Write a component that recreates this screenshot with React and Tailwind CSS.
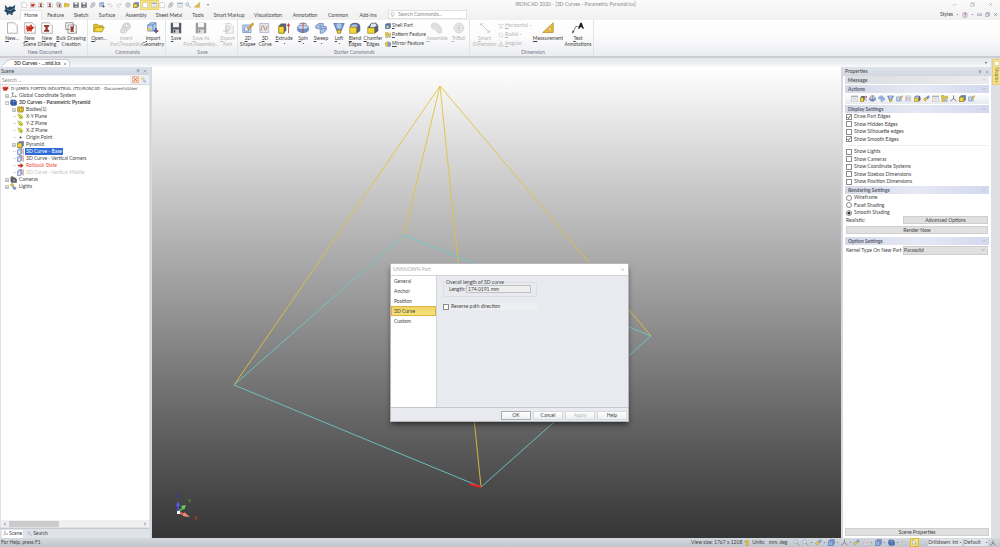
import React, { useState } from 'react';

const drawings = {
    page: <path d="M2 1h9l4 4v10H2z" fill="#fdfdfd" stroke="#999" />,
    scene: (
        <>
            <path d="M1 1h10l4 4v10H1z" fill="#fff" stroke="#999" />
            <path d="M3 4l3 2 4-3 1 3 3 1-3 3-1 3-3-1-3 1-1-4z" fill="#d6402c" />
            <path d="M5 8l3 1 4-2" stroke="#7c1a10" fill="none" />
        </>
    ),
    rootScene: (
        <>
            <path d="M1 2l4 3 3-2 3 2 4-3-1 5 1 2-3 1-1 4-3-2-4 2-1-4-2-2 1-2z" fill="#d6402c" />
            <path d="M4 8l4 2 4-3" stroke="#7c1a10" strokeWidth="1.500" fill="none" />
        </>
    ),
    drawing: (
        <>
            <path d="M1 1h10l4 4v10H1z" fill="#fff" stroke="#999" />
            <path d="M4 4h7v2l-2 1v3l2 1v2H4v-2l2-1V7L4 6z" fill="#933a30" />
        </>
    ),
    bulk: (
        <>
            <path d="M1 1h10v9H1zM4 4h10l1 1v10H4z" fill="#fff" stroke="#777" />
            <path d="M7 6h5v2l-1 1v2l1 1v1H7v-1l1-1V9L7 8z" fill="#933a30" />
        </>
    ),
    folder: (
        <>
            <path d="M1 13V3h5l2 2h5v3" fill="#e8c22a" stroke="#a08a2a" />
            <path d="M1 13l3-6h11l-3 6z" fill="#f5dc3c" stroke="#a08a2a" />
        </>
    ),
    save: (
        <>
            <path d="M1 1h13l1 1v13H1z" fill="#555963" />
            <path d="M4 1h8v6H4z" fill="#f4f4f4" />
            <path d="M4 10h8v5H4z" fill="#c8ccd4" />
            <path d="M5 11h2v3H5z" fill="#333" />
        </>
    ),
    gears: (
        <>
            <path d="M3 6l3-4 5-1 3 4-1 4-5 2-4-1z" fill="#ccc" stroke="#999" />
            <path d="M1 10l4-3 4 2v4l-4 2-4-1z" fill="#ddd" stroke="#999" />
            <circle cx="9" cy="5" r="2" fill="#fff" stroke="#999" />
            <circle cx="5" cy="11" r="1.5" fill="#fff" stroke="#999" />
        </>
    ),
    importGeo: (
        <>
            <path d="M1 4l4-3h7v8l-4 3H1z" fill="#bcd3f2" stroke="#4f73b3" />
            <path d="M1 4h7v8M8 4l4-3" fill="none" stroke="#4f73b3" />
            <circle cx="3" cy="10" r="2" fill="#efcb32" />
            <path d="M12 8v7M9 12h6" stroke="#2f55a8" strokeWidth="2" />
            <path d="M12 12h3" stroke="#d04030" strokeWidth="2" />
        </>
    ),
    exportPart: (
        <>
            <path d="M5 2h6l4 4v9H5z" fill="#eee" stroke="#aaa" />
            <circle cx="8" cy="8" r="3" fill="#ddd" stroke="#aaa" />
            <path d="M1 12h6M5 10l3 2-3 2" stroke="#999" fill="none" />
        </>
    ),
    shape2d: (
        <>
            <path d="M1 4h11v10H1z" fill="#c9dcf5" stroke="#6d8cbc" />
            <path d="M3 12V8l3-2 3 3v3z" fill="#eef5ff" stroke="#5878ac" />
            <path d="M7 9l7-8 2 2-7 7z" fill="#e3a53a" stroke="#9c6b1c" strokeWidth=".6" />
        </>
    ),
    curve3d: (
        <>
            <path d="M1 2h12v12H1z" fill="#dfe6f5" stroke="#a4b0cc" />
            <path d="M3 12c0-9 3-9 4-4s3 4 4-3" stroke="#d07840" fill="none" strokeWidth="1.2" />
        </>
    ),
    extrude: (
        <>
            <path d="M1 5l3-3h7v9l-3 4H1z" fill="#5a6478" />
            <path d="M1 6h7v9H1z" fill="#f4d532" stroke="#8a7414" />
            <path d="M14 15V3M12.500 5l1.500-3 1.500 3z" stroke="#cf3328" fill="#cf3328" />
        </>
    ),
    spin: (
        <>
            <path d="M1 7v4c2 4 12 4 14 0V7z" fill="#7296cc" stroke="#4a6698" />
            <ellipse cx="8" cy="7" rx="7" ry="3" fill="#c2d5f0" stroke="#5d7cae" />
            <path d="M8 1v13" stroke="#cf3328" />
            <path d="M3 3c2-2 8-2 10 0" stroke="#555" fill="none" />
        </>
    ),
    sweep: (
        <>
            <path d="M1 5l4-3h6v4h4v5l-5 4H7V9H4L1 8z" fill="#a8c3ea" stroke="#6280b2" />
            <path d="M5 5h3v4h7" stroke="#6280b2" fill="none" />
        </>
    ),
    loft: (
        <>
            <path d="M1 2h14l-4 9H5z" fill="#7898cc" stroke="#50699a" />
            <path d="M5 2h6v5l-3 3-3-3z" fill="#afc6ea" />
            <path d="M5 11h6l-1 4H6z" fill="#f1d134" stroke="#8a7414" />
        </>
    ),
    blend: (
        <>
            <path d="M1 6c0-3 3-5 7-5s7 2 7 5v6l-4 3H1z" fill="#5c6880" />
            <path d="M2 6c2-4 8-4 10-1l-3 2H2z" fill="#a9c5ee" />
            <path d="M1 7h9v8H1z" fill="#f4d532" stroke="#8a7414" strokeWidth=".6" />
        </>
    ),
    chamfer: (
        <>
            <path d="M1 7l5-6h6l3 4v7l-4 3H1z" fill="#566074" />
            <path d="M6 2h5l2 3-4 2H4z" fill="#dfe8f5" />
            <path d="M1 8h9v7H1z" fill="#f4d532" stroke="#8a7414" strokeWidth=".6" />
        </>
    ),
    shell: (
        <>
            <path d="M1 4l4-3h10v10l-4 4H1z" fill="#4878b8" stroke="#2c4a7c" />
            <path d="M4 7h6v6H4z" fill="#f1e16c" />
        </>
    ),
    pattern: (
        <>
            <path d="M1 1h6v6H1zM9 3h6v6H9zM2 9h6v6H2z" fill="#f0d338" stroke="#8f7d2c" />
            <path d="M10 11h5v4h-5z" fill="#7c9ccc" />
        </>
    ),
    mirror: (
        <>
            <path d="M7 2v12l-3 1-3-3V5z" fill="#f0cf35" stroke="#8a7414" />
            <path d="M9 2v12l3 1 3-3V5z" fill="#7d93d0" stroke="#455ca0" />
        </>
    ),
    assemble: (
        <>
            <path d="M1 3l4-2 6 3 3 5v5l-4 1-4-4-5-3z" fill="#ddd" stroke="#aaa" />
            <path d="M1 5l6 2 4 7M3 3l6 2 4 7" stroke="#aaa" fill="none" />
        </>
    ),
    ball: (
        <>
            <circle cx="8" cy="8" r="6.500" fill="#e4e4e4" stroke="#aaa" />
            <path d="M2 8h12M8 2v12M4 4c3 2 5 2 8 0M4 12c3-2 5-2 8 0" stroke="#aaa" fill="none" />
        </>
    ),
    smart: (
        <>
            <path d="M3 3l10 10M1 5l4-4M11 15l4-4" stroke="#a8a8a8" strokeWidth="1.300" />
            <circle cx="3" cy="3" r="1.500" fill="#aaa" />
            <circle cx="13" cy="13" r="1.500" fill="#aaa" />
        </>
    ),
    horizontal: <path d="M2 1v5M14 1v5M2 4h12M5 9h6v5H5z" stroke="#aaa" fill="none" />,
    radial: <path d="M8 2a6 6 0 1 0 6 6M8 8l5-5" stroke="#aaa" fill="none" />,
    angular: <path d="M1 14L8 2l6 12zM5 8c3 0 5 3 5 6" stroke="#aaa" fill="none" />,
    measure: (
        <>
            <path d="M1 14L15 1v13z" fill="#e9b93a" stroke="#b58c2c" />
            <path d="M8 11l4-4v4z" fill="#fff" stroke="#b58c2c" strokeWidth=".6" />
        </>
    ),
    textAnn: (
        <>
            <path d="M1 15l4-9h4" stroke="#666" fill="none" />
            <path d="M0 15l1-4 2 2z" fill="#333" />
            <path d="M8 9l3-8h2l3 8h-2l-1-2h-2l-1 2z" fill="#222" />
        </>
    ),
    undo: <path d="M5 3L2 6l3 3M2 6h8c5 0 5 7 0 7H6" stroke="#bbb" fill="none" strokeWidth="1.500" />,
    redo: <path d="M11 3l3 3-3 3M14 6H6c-5 0-5 7 0 7h4" stroke="#bbb" fill="none" strokeWidth="1.500" />,
    find: (
        <>
            <circle cx="6" cy="6" r="4" fill="#e3eefb" stroke="#8098bc" strokeWidth="1.500" />
            <path d="M9 9l6 6" stroke="#a08a5e" strokeWidth="2" />
        </>
    ),
    bulb: <path d="M6 12c0-3-3-3-3-6a5 5 0 0 1 10 0c0 3-3 3-3 6zM6 15h4" stroke="#888" fill="none" strokeWidth="1.500" />,
    table: (
        <>
            <path d="M1 2h14v12H1z" fill="#fafafa" stroke="#999" />
            <path d="M1 3h14v2H1z" fill="#8d9ab0" />
            <path d="M4 8h8M4 11h8" stroke="#aaa" />
        </>
    ),
    cube: (
        <>
            <path d="M1 5l4-4h10v10l-4 4H1z" fill="#6684b6" stroke="#3b5480" />
            <path d="M1 5h10v10H1z" fill="#f2d434" stroke="#8a7414" />
        </>
    ),
    blueCube: (
        <>
            <path d="M1 5l4-4h10v10l-4 4H1z" fill="#5f84c4" stroke="#42609a" />
            <path d="M1 5h10v10H1z" fill="#86a8e0" stroke="#42609a" />
        </>
    ),
    curve: (
        <>
            <path d="M1 5l4-4h6v11l-3 3H1z" fill="#9cb3dc" stroke="#4c5f96" />
            <path d="M3 6h4v7H3z" fill="#e8eefa" />
            <path d="M14 1v14" stroke="#c43d3a" strokeWidth="1.500" />
        </>
    ),
    plane: (
        <>
            <path d="M2 4l6-2 6 7-3 5-6-3z" fill="#e6e548" stroke="#b0ae38" />
            <path d="M1 1l9 9M10 6v5H5" stroke="#6c7438" fill="none" />
        </>
    ),
    body: (
        <>
            <path d="M1 3l4-2 3 2 3-2 4 2v9l-4 3-3-2-3 2-4-3z" fill="#dfb42a" stroke="#6e5a14" />
            <path d="M6 5h5v7H6z" fill="#f6ed72" stroke="#6e5a14" />
        </>
    ),
    sphere: (
        <>
            <path d="M3 2h8l4 3v8l-4 2H4l-3-4V5z" fill="#2c55a2" stroke="#234078" />
            <path d="M8 2v12M2 6h12" stroke="#88a8e0" />
        </>
    ),
    origin: <circle cx="8" cy="8" r="2.500" fill="#555" />,
    arrow: <path d="M2 6h6V2l7 6-7 6v-4H2z" fill="#b8362a" />,
    camera: (
        <>
            <path d="M2 4h9l4 3v8H4L2 12z" fill="#5c616b" stroke="#3c4048" />
            <circle cx="5" cy="4" r="3" fill="#777" stroke="#444" />
            <circle cx="9" cy="10" r="2" fill="#aab" />
        </>
    ),
    light: (
        <>
            <path d="M1 3l5-2 3 5-4 3z" fill="#e9c745" stroke="#8a7414" />
            <path d="M7 8l7 3-2 4-5-2z" fill="#8aa6dd" stroke="#3e5c9c" />
        </>
    ),
    coord: <path d="M6 2v8h8M6 10l-5 4M4 4l2-3 2 3M12 8l3 2-3 2" stroke="#555" fill="none" strokeWidth="1.300" />,
    triad: (
        <>
            <path d="M8 8V1" stroke="#3a9a3a" strokeWidth="2" />
            <path d="M8 8l-7 6" stroke="#3b62c8" strokeWidth="2" />
            <path d="M8 8l7 6" stroke="#d04030" strokeWidth="2" />
        </>
    ),
    link: (
        <>
            <path d="M1 10l6-5 4 3-6 6z" fill="#e4c33a" stroke="#8f7e34" />
            <path d="M8 5l4-4 3 3-4 5z" fill="#7e9acb" stroke="#566fa0" />
        </>
    ),
    cross: <path d="M2 2l12 12M14 2L2 14" stroke="#df5a34" strokeWidth="3" />,
    close: <path d="M3 3l10 10M13 3L3 13" stroke="currentColor" strokeWidth="1.600" />,
    pin: <path d="M5 2h6v6H5zM3 8h10M8 8v6" stroke="currentColor" fill="none" strokeWidth="1.500" />,
    minimize: <path d="M2 9h12" stroke="currentColor" strokeWidth="1.500" />,
    restore: <path d="M2 5h9v9H2zM5 5V2h9v9h-3" stroke="currentColor" fill="none" strokeWidth="1.500" />,
    bar: <path d="M1 6h14v5H1z" stroke="currentColor" fill="none" strokeWidth="1.500" />,
    help: (
        <>
            <circle cx="8" cy="8" r="7" fill="#dfe4f4" stroke="#8190c0" />
            <path d="M5 6c0-4 6-4 6-1 0 2-3 2-3 5M8 12v2" stroke="#cc4038" fill="none" strokeWidth="2" />
        </>
    ),
    cursor: <path d="M4 1v12l3-3 3 5 2-1-3-5h4z" fill="#fff" stroke="#777" />,
    ruler: (
        <>
            <path d="M6 1h6v14H6z" fill="#ecc33c" stroke="#a88420" />
            <path d="M1 4h5M3 2L1 4l2 2" stroke="#b08820" fill="none" strokeWidth="1.500" />
        </>
    ),
    down: <path d="M3 5h10l-5 6z" fill="currentColor" />,
    up: <path d="M4 10l4-5 4 5" stroke="currentColor" fill="none" strokeWidth="2" />,
    left: <path d="M11 2L5 8l6 6" stroke="currentColor" fill="none" strokeWidth="3" />,
    right: <path d="M5 2l6 6-6 6" stroke="currentColor" fill="none" strokeWidth="3" />,
    chevron: <path d="M3 5l5 5 5-5" stroke="currentColor" fill="none" strokeWidth="1.500" />,
    logo: (
        <>
            <path d="M1 1l4 4 3-2 3 1 4-3-1 6 2 2-4 2-1 4-4-2-3 2-1-4-3-2 2-2z" fill="#24445f" />
            <path d="M4 7l4 2 5-3" stroke="#7da0ba" fill="none" />
            <path d="M5 12l3 1 3-2" stroke="#5d8098" fill="none" />
        </>
    ),
};

function Icon({ name, className = 'size-[7px]' }) {
    return (
        <svg viewBox="0 0 16 16" aria-hidden="true" className={`shrink-0 ${className}`}>
            {drawings[name]}
        </svg>
    );
}

const quickAccess = [
    'page', 'scene', 'drawing', 'drawing', 'bulk', 'folder', 'save', 'save', 'gears', 'importGeo', 'undo',
    'redo', 'ball', 'cube', 'page', 'table', 'page', 'gears', 'table', 'find', 'measure',
];

const tabs = [
    ['Home', 'w-[22px]'], ['Feature', 'w-[27px]'], ['Sketch', 'w-[24px]'], ['Surface', 'w-[28px]'],
    ['Assembly', 'w-[30px]'], ['Sheet Metal', 'w-[36px]'], ['Tools', 'w-[22px]'], ['Smart Markup', 'w-[40px]'],
    ['Visualization', 'w-[38px]'], ['Annotation', 'w-[36px]'], ['Common', 'w-[30px]'], ['Add-Ins', 'w-[30px]'],
];

function TitleBar() {
    const [active, setActive] = useState('Home');
    return (
        <header className="flex bg-linear-to-b from-[#fbfbfb] to-[#f0f0f0]">
            <div className="flex w-[20px] items-center justify-center">
                <Icon name="logo" className="size-[12px]" />
            </div>
            <div className="min-w-0 flex-1">
                <div className="flex h-[9px] items-center">
                    <div className="flex w-[181px] items-center justify-between">
                        {quickAccess.map((name, i) => (
                            <button
                                key={i}
                                aria-label={`${name} ${i + 1}`}
                                className={i === 14 || i === 15 ? 'bg-[#f7e58a] p-px ring-1 ring-[#ecd46c]' : 'p-px'}
                            >
                                <Icon name={name} className="size-[6px]" />
                            </button>
                        ))}
                    </div>
                    <Icon name="down" className="ml-[5px] size-[4px] text-gray-500" />
                    <h1 className="flex-1 pl-[126px] text-center text-[#8a8a8a]">
                        IRONCAD 2020 - [3D Curves - Parametric Pyramid.ics]
                    </h1>
                    <div className="flex w-[185px] justify-end gap-[13px] pr-[7px] pl-[90px] text-gray-400">
                        <button aria-label="Minimize"><Icon name="minimize" className="size-[5px]" /></button>
                        <button aria-label="Restore"><Icon name="restore" className="size-[5px]" /></button>
                        <button aria-label="Close"><Icon name="close" className="size-[5px]" /></button>
                    </div>
                </div>
                <nav className="flex h-[11px] items-end">
                    {tabs.map(([name, width]) => (
                        <button
                            key={name}
                            onClick={() => setActive(name)}
                            className={`h-[10px] shrink-0 ${width} ${active === name ? 'border-x border-t border-[#e4e4e4] bg-white' : ''}`}
                        >
                            {name}
                        </button>
                    ))}
                    <label className="mb-px ml-[5px] flex h-[9px] w-[79px] items-center gap-[3px] border border-[#e0e0e0] bg-white pl-px">
                        <Icon name="bulb" className="size-[5px]" />
                        <input aria-label="Search commands" placeholder="Search Commands..." className="w-full placeholder:text-[#888]" />
                    </label>
                    <div className="flex flex-1 items-center justify-end gap-[3px] self-center pr-[2px] text-gray-500">
                        <button className="text-[#444]">Styles</button>
                        <Icon name="down" className="size-[3px]" />
                        <Icon name="help" className="size-[6px]" />
                        <Icon name="down" className="size-[3px]" />
                        <Icon name="bar" className="size-[5px]" />
                        <Icon name="restore" className="size-[5px]" />
                        <Icon name="close" className="size-[5px]" />
                    </div>
                </nav>
            </div>
        </header>
    );
}

function RibbonButton({ icon, lines, width, disabled, menu }) {
    return (
        <button
            disabled={disabled}
            className={`flex shrink-0 flex-col items-center leading-[6px] whitespace-nowrap ${width} ${disabled ? 'text-[#b4b4b4]' : ''}`}
        >
            <Icon name={icon} className={`mb-px size-[12px] ${disabled ? 'opacity-60 grayscale' : ''}`} />
            {lines.map((line, i) => (
                <span key={line} className={i === 0 ? 'first-letter:underline' : ''}>{line}</span>
            ))}
            {menu && <Icon name="down" className="mt-[1px] size-[3px]" />}
        </button>
    );
}

function RibbonList({ items, width, disabled }) {
    return (
        <div className={`flex h-[25px] shrink-0 flex-col justify-between ${width} ${disabled ? 'text-[#b4b4b4]' : ''}`}>
            {items.map(([icon, label, menu]) => (
                <button key={label} disabled={disabled} className="flex items-center gap-px whitespace-nowrap">
                    <Icon name={icon} className="size-[6px]" />
                    <span className="first-letter:underline">{label}</span>
                    {menu && <Icon name="down" className="size-[3px]" />}
                </button>
            ))}
        </div>
    );
}

function RibbonGroup({ title, width, children }) {
    return (
        <section className={`flex shrink-0 flex-col justify-between border-r border-[#e2e4e7] pt-[2px] ${width}`}>
            <div className="flex">{children}</div>
            <h2 className="text-center text-[#778]">{title}</h2>
        </section>
    );
}

function Ribbon() {
    return (
        <div className="flex h-[38px] shrink-0 overflow-hidden border-b-2 border-[#cbcdd2] bg-linear-to-b from-white via-[#fbfbfc] to-[#eaecef]">
            <RibbonGroup title="New Document" width="w-[88px] pl-[3px]">
                <RibbonButton icon="page" lines={['New...']} width="w-[18px]" />
                <RibbonButton icon="scene" lines={['New', 'Scene']} width="w-[17px]" />
                <RibbonButton icon="drawing" lines={['New', 'Drawing']} width="w-[18px]" />
                <RibbonButton icon="bulk" lines={['Bulk Drawing', 'Creation']} width="w-[30px]" />
            </RibbonGroup>
            <RibbonGroup title="Commands" width="w-[78px] pl-[2px]">
                <RibbonButton icon="folder" lines={['Open...']} width="w-[18px]" />
                <RibbonButton icon="gears" lines={['Insert', 'Part/Assembly']} width="w-[36px]" disabled />
                <RibbonButton icon="importGeo" lines={['Import', 'Geometry']} width="w-[18px]" />
            </RibbonGroup>
            <RibbonGroup title="Save" width="w-[72px] pl-[2px]">
                <RibbonButton icon="save" lines={['Save']} width="w-[16px]" />
                <RibbonButton icon="save" lines={['Save As', 'Part/Assembly...']} width="w-[34px]" disabled />
                <RibbonButton icon="exportPart" lines={['Export', 'Part']} width="w-[19px]" disabled />
            </RibbonGroup>
            <RibbonGroup title="Starter Commands" width="w-[232px] pl-px">
                <RibbonButton icon="shape2d" lines={['2D', 'Shape▾']} width="w-[18px]" />
                <RibbonButton icon="curve3d" lines={['3D', 'Curve']} width="w-[16px]" />
                <RibbonButton icon="extrude" lines={['Extrude']} width="w-[22px]" menu />
                <RibbonButton icon="spin" lines={['Spin']} width="w-[16px]" menu />
                <RibbonButton icon="sweep" lines={['Sweep']} width="w-[20px]" menu />
                <RibbonButton icon="loft" lines={['Loft']} width="w-[16px]" menu />
                <RibbonButton icon="blend" lines={['Blend', 'Edges']} width="w-[16px]" />
                <RibbonButton icon="chamfer" lines={['Chamfer', 'Edges']} width="w-[20px]" />
                <RibbonList
                    width="w-[43px] pl-[2px]"
                    items={[['shell', 'Shell Part'], ['pattern', 'Pattern Feature'], ['mirror', 'Mirror Feature']]}
                />
                <RibbonButton icon="assemble" lines={['Assemble']} width="w-[22px]" disabled />
                <RibbonButton icon="ball" lines={['TriBall']} width="w-[21px]" disabled />
            </RibbonGroup>
            <RibbonGroup title="Dimension" width="w-[124px] pl-[3px]">
                <RibbonButton icon="smart" lines={['Smart', 'Dimension']} width="w-[23px]" disabled />
                <RibbonList
                    width="w-[36px] pl-[2px]"
                    disabled
                    items={[['horizontal', 'Horizontal', true], ['radial', 'Radial', true], ['angular', 'Angular']]}
                />
                <RibbonButton icon="measure" lines={['Measurement']} width="w-[32px]" />
                <RibbonButton icon="textAnn" lines={['Text', 'Annotations']} width="w-[28px]" />
            </RibbonGroup>
        </div>
    );
}

const tree = [
    {
        icon: 'rootScene',
        label: 'D:\\JAMES FORTEN INDUSTRIAL LTD\\IRONCAD - Documents\\User',
        pad: 'pl-px',
        style: "font-['DejaVu_Sans',sans-serif] text-[4px]",
    },
    { icon: 'coord', label: 'Global Coordinate System', pad: 'pl-[4px]', box: '+' },
    { icon: 'sphere', label: '3D Curves - Parametric Pyramid', pad: 'pl-[4px]', box: '-', style: 'font-bold' },
    { icon: 'body', label: 'Bodies(1)', pad: 'pl-[11px]', box: '+' },
    { icon: 'plane', label: 'X-Y Plane', pad: 'pl-[11px]', dash: true },
    { icon: 'plane', label: 'Y-Z Plane', pad: 'pl-[11px]', dash: true },
    { icon: 'plane', label: 'X-Z Plane', pad: 'pl-[11px]', dash: true },
    { icon: 'origin', label: 'Origin Point', pad: 'pl-[11px]', dash: true },
    { icon: 'cube', label: 'Pyramid', pad: 'pl-[11px]', box: '+' },
    { icon: 'curve', label: '3D Curve - Base', pad: 'pl-[11px]', dash: true, style: 'bg-[#2f6bd6] text-white' },
    { icon: 'curve', label: '3D Curve - Vertical Corners', pad: 'pl-[11px]', dash: true },
    { icon: 'arrow', label: 'Rollback State', pad: 'pl-[11px]', dash: true, style: 'text-[#f04a35]' },
    { icon: 'curve', label: '3D Curve - Vertical Middle', pad: 'pl-[11px]', dash: true, style: 'text-[#c4c4c4]' },
    { icon: 'camera', label: 'Cameras', pad: 'pl-[4px]', box: '+' },
    { icon: 'light', label: 'Lights', pad: 'pl-[4px]', box: '+' },
];

function ScenePanel() {
    return (
        <aside className="flex w-[152px] shrink-0 flex-col border-r-2 border-[#d6d8dd] bg-[#dfe2e8] pr-px">
            <div className="flex h-[8px] items-center justify-between bg-linear-to-b from-[#dde2ec] to-[#cfd5e0] pr-[2px] pl-px">
                <h2>Scene</h2>
                <span className="flex gap-[3px] text-gray-500">
                    <Icon name="pin" className="size-[4px]" />
                    <Icon name="close" className="size-[4px]" />
                </span>
            </div>
            <div className="flex h-[10px] items-center gap-[2px] border-b border-[#d6d9df] bg-[#eceef2] pr-[2px] pl-px">
                <input aria-label="Search scene" placeholder="Search ..." className="h-[8px] min-w-0 flex-1 bg-white px-px placeholder:text-[#888]" />
                <button aria-label="Clear search" className="border border-[#f0b898] bg-[#fbe0cf]"><Icon name="cross" className="size-[5px]" /></button>
                <Icon name="light" className="size-[6px] opacity-50" />
            </div>
            <ul className="ml-px flex-1 overflow-hidden bg-white">
                {tree.map(({ icon, label, pad, box, dash, style = '' }) => (
                    <li key={label} className={`flex h-[7px] items-center gap-px leading-[7px] whitespace-nowrap ${pad}`}>
                        {box && (
                            <button aria-label={`Toggle ${label}`} className="flex size-[4px] items-center justify-center border border-[#c4c4c4] text-[4px] leading-[4px]">
                                {box}
                            </button>
                        )}
                        {dash && <span className="ml-px w-[3px] border-t border-dotted border-[#ccc]" />}
                        <Icon name={icon} className="size-[7px]" />
                        <span className={`px-px ${style}`}>{label}</span>
                    </li>
                ))}
            </ul>
            <div className="ml-px flex h-[7px] items-center gap-[2px] bg-[#f0f0f0] px-[2px] text-gray-500">
                <Icon name="left" className="size-[4px]" />
                <div className="flex h-[6px] flex-1"><div className="w-[38%] bg-[#cbcbcb]" /></div>
                <Icon name="right" className="size-[4px]" />
            </div>
            <div className="mt-px flex h-[10px] items-center gap-[4px] border-t border-[#c4c8cf] pl-[2px]">
                <button className="flex h-[8px] items-center gap-px bg-white px-px">
                    <Icon name="coord" className="size-[5px]" />Scene
                </button>
                <button className="flex items-center gap-px"><Icon name="find" className="size-[5px]" />Search</button>
            </div>
        </aside>
    );
}

function PartDialog() {
    const [page, setPage] = useState('3D Curve');
    return (
        <div role="dialog" aria-label="UNKNOWN Part" className="absolute top-[196px] left-[238px] flex h-[159px] w-[239px] flex-col border border-[#b4b6ba] bg-[#e8eaef] shadow-md shadow-black/40">
            <div className="flex h-[11px] items-center justify-between bg-white pr-[3px] pl-[2px] text-[#aaa]">
                <h2>UNKNOWN Part</h2>
                <button aria-label="Close dialog"><Icon name="close" className="size-[5px]" /></button>
            </div>
            <div className="flex flex-1">
                <nav className="flex w-[46px] flex-col border-t border-r border-[#d0d3da] bg-white">
                    {['General', 'Anchor', 'Position', '3D Curve', 'Custom'].map((name) => (
                        <button
                            key={name}
                            onClick={() => setPage(name)}
                            className={`flex h-[10px] items-center border px-[2px] ${page === name ? 'border-[#dcb440] bg-linear-to-b from-[#efd263] to-[#f6e27c]' : 'border-transparent'}`}
                        >
                            {name}
                        </button>
                    ))}
                </nav>
                <div className="flex-1 border-t border-[#d0d3da] pt-[3px] pl-[6px]">
                    <fieldset className="w-[94px] border border-[#dcdee2] pb-[3px]">
                        <legend className="ml-px px-px leading-[6px]">Overall length of 3D curve</legend>
                        <label className="flex items-center pl-[5px]">
                            <span className="w-[17px]">Length:</span>
                            <input readOnly value="174.0191 mm" className="h-[8px] w-[65px] border border-[#bfc1c5] bg-[#eeeeef] px-px" />
                        </label>
                    </fieldset>
                    <div className="mt-[6px] w-[94px] bg-[#eeeff1]">
                        <Check label="Reverse path direction" />
                    </div>
                </div>
            </div>
            <div className="flex h-[14px] items-center justify-end gap-[2px] border-t border-[#c4c7cf] pt-px pr-px">
                {['OK', 'Cancel', 'Apply', 'Help'].map((name) => (
                    <button
                        key={name}
                        disabled={name === 'Apply'}
                        className={`h-[9px] w-[30px] border bg-linear-to-b from-white to-[#eceef1] disabled:text-[#bbb] ${name === 'OK' ? 'border-[#aaadb3]' : 'border-[#d6d9de]'}`}
                    >
                        {name}
                    </button>
                ))}
            </div>
        </div>
    );
}

function Viewport() {
    return (
        <main className="relative min-w-0 flex-1 overflow-hidden bg-linear-to-b from-white via-[#989898] to-[#363636]">
            <svg viewBox="0 0 689 471" preserveAspectRatio="xMinYMin meet" className="size-full" fill="none">
                <g stroke="#e0c23c" strokeWidth="0.9">
                    <path d="M288 19L82 318M288 19l-36 149M288 19l41 401M288 19l211 250" />
                </g>
                <path d="M252 168L82 318l247 102 170-151z" stroke="#6ccac8" strokeWidth="0.9" />
                <path d="M318 417l11 3" stroke="#e22" strokeWidth="2" />
                <g strokeWidth="2">
                    <path d="M26 445v-8" stroke="#4a48d8" />
                    <path d="M26 445l5-4" stroke="#52b04a" />
                    <path d="M26 445l9 4" stroke="#d86a60" />
                </g>
                <path d="M24 439l2-5 2 5z" fill="#5a58f0" />
                <path d="M29 439l5-1-2 5z" fill="#6ccf5c" />
                <path d="M32 445l6 5-7-1z" fill="#ee8b80" />
                <path d="M25 444h3v3h-3z" fill="#fff" />
                <g fontSize="5">
                    <text x="25" y="430" fill="#3430c8">Z</text>
                    <text x="36" y="436" fill="#4fae3c">Y</text>
                    <text x="42" y="453" fill="#c83a30">X</text>
                </g>
            </svg>
            <PartDialog />
        </main>
    );
}

function Check({ label, type = 'checkbox', name, checked = false }) {
    const round = type === 'radio';
    return (
        <label className="flex items-center gap-[2px] leading-[7px] whitespace-nowrap">
            <span className="grid">
                <input
                    type={type}
                    name={name}
                    defaultChecked={checked}
                    className={`peer col-start-1 row-start-1 size-[6px] appearance-none border border-[#8c8c8c] bg-white ${round ? 'rounded-full' : ''}`}
                />
                <svg viewBox="0 0 6 6" className="pointer-events-none col-start-1 row-start-1 hidden size-[6px] peer-checked:block">
                    {round ? <circle cx="3" cy="3" r="1.500" fill="#333" /> : <path d="M1.500 3l1 1.500 2-3" stroke="#444" strokeWidth=".8" fill="none" />}
                </svg>
            </span>
            {label}
        </label>
    );
}

function Section({ title, plain, children }) {
    return (
        <section className="bg-white">
            <h3 className={`flex h-[8px] items-center justify-between px-[3px] font-bold text-[#555b6c] ${plain ? 'bg-linear-to-r from-[#dcdee1] to-[#ebebed]' : 'bg-linear-to-r from-[#d5d9e6] via-[#e6e9f4] to-[#d3d8ee]'}`}>
                {title}
                <Icon name="up" className="size-[4px] text-gray-400" />
            </h3>
            {children}
        </section>
    );
}

const panelButton = 'h-[8px] border border-[#cfcfcf] bg-[#e0e0e0] text-center leading-[6px]';

function PropertiesPanel() {
    return (
        <aside className="flex w-[150px] shrink-0 flex-col border-l-2 border-[#d6d9de] bg-white">
            <div className="flex h-[9px] items-center justify-between bg-linear-to-b from-[#dfe3eb] to-[#d2d7e0] px-[2px]">
                <h2>Properties</h2>
                <span className="flex gap-[3px] text-gray-500">
                    <Icon name="pin" className="size-[4px]" />
                    <Icon name="close" className="size-[4px]" />
                </span>
            </div>
            <div className="flex flex-1 flex-col gap-px px-[2px]">
                <Section title="Message" plain />
                <Section title="Actions">
                    <div className="flex h-[11px] items-center gap-[2px] bg-linear-to-b from-white to-[#e8eaee] px-[6px]">
                        {['table', 'extrude', 'spin', 'sweep', 'loft', 'shape2d', 'curve3d', 'blend', 'link', 'table', 'pattern', 'triad', 'cube', 'shape2d'].map((name, i) => (
                            <button key={i} aria-label={`Action ${i + 1}`}><Icon name={name} className="size-[7px]" /></button>
                        ))}
                    </div>
                </Section>
                <Section title="Display Settings">
                    <div className="flex h-[30px] flex-col justify-between px-px">
                        <Check label="Draw Part Edges" checked />
                        <Check label="Show Hidden Edges" />
                        <Check label="Show Silhouette edges" />
                        <Check label="Show Smooth Edges" checked />
                    </div>
                    <hr className="mx-px my-[2px] border-[#eee]" />
                    <div className="flex h-[37px] flex-col justify-between px-px">
                        <Check label="Show Lights" />
                        <Check label="Show Cameras" />
                        <Check label="Show Coordinate Systems" />
                        <Check label="Show Sizebox Dimensions" />
                        <Check label="Show Position Dimensions" />
                    </div>
                </Section>
                <Section title="Rendering Settings">
                    <div className="flex h-[22px] flex-col justify-between px-px">
                        <Check type="radio" name="shading" label="Wireframe" />
                        <Check type="radio" name="shading" label="Facet Shading" />
                        <Check type="radio" name="shading" label="Smooth Shading" checked />
                    </div>
                    <div className="flex items-center px-px">
                        <span className="w-[57px]">Realistic:</span>
                        <button className={`flex-1 ${panelButton}`}>Advanced Options</button>
                    </div>
                    <div className="flex px-px py-[2px]">
                        <button className={`flex-1 ${panelButton}`}>Render Now</button>
                    </div>
                </Section>
                <Section title="Option Settings">
                    <label className="flex h-[10px] items-center px-px">
                        <span className="w-[57px] whitespace-nowrap">Kernel Type On New Part</span>
                        <span className="flex flex-1 items-center border border-[#cfcfcf] bg-[#e0e0e0] pr-[2px]">
                            <select className="h-[7px] flex-1 appearance-none"><option>Parasolid</option></select>
                            <Icon name="chevron" className="size-[4px]" />
                        </span>
                    </label>
                </Section>
                <button className={`mt-auto mb-[2px] ${panelButton}`}>Scene Properties</button>
            </div>
        </aside>
    );
}

function StatusBar() {
    return (
        <footer className="flex h-[9px] shrink-0 items-center justify-between bg-linear-to-b from-[#d5d9df] to-[#c0c5cd] px-px">
            <span>For Help, press F1</span>
            <div className="flex w-[308px] items-center justify-between pr-[3px] whitespace-nowrap">
                <span>View size: 1767 x 1208</span>
                <span className="flex items-center gap-[2px] pr-[2px]"><Icon name="ruler" className="size-[6px]" />Units:</span>
                <span className="pr-[4px]">mm, deg</span>
                {['find', 'find', 'link', 'blueCube', 'triad', 'link', 'curve3d', 'blueCube', 'sphere', 'undo'].map((name, i) => (
                    <button key={i} aria-label={`View tool ${i + 1}`} className="flex items-center gap-px">
                        <Icon name={name} className="size-[7px] opacity-80" />
                        {i > 0 && i < 9 && i !== 5 && <Icon name="down" className="size-[3px] text-gray-500" />}
                    </button>
                ))}
                <button aria-label="Select" className="border border-[#d8b840] bg-[#f9e678]"><Icon name="cursor" className="size-[7px]" /></button>
                <Icon name="cursor" className="size-[6px] opacity-50" />
                <label className="flex w-[34px] items-center bg-[#e2e5ea]">
                    <select aria-label="Selection filter" className="h-[7px] w-[31px] appearance-none"><option>Drilldown: Int</option></select>
                    <Icon name="down" className="size-[3px]" />
                </label>
                <label className="flex w-[24px] items-center bg-[#e2e5ea]">
                    <select aria-label="Configuration" className="h-[7px] w-[21px] appearance-none"><option>Default</option></select>
                    <Icon name="down" className="size-[3px]" />
                </label>
                <Icon name="triad" className="size-[6px]" />
            </div>
        </footer>
    );
}

export default function App() {
    return (
        <div className="flex h-screen flex-col overflow-hidden bg-[#e3e5ea] font-['Lato','Open_Sans',sans-serif] text-[5px] leading-[7px] text-[#444]">
            <TitleBar />
            <Ribbon />
            <div className="flex min-h-0 flex-1">
                <div className="flex min-w-0 flex-1 flex-col">
                    <div className="flex h-[9px] shrink-0 items-end justify-between bg-linear-to-b from-[#e3e5e9] to-[#f7f8fa] pr-[3px]">
                        <div className="flex items-end">
                            <svg viewBox="0 0 10 8" className="h-[8px] w-[10px]" aria-hidden="true">
                                <path d="M1 8L8 1h2v7z" fill="#fff" />
                                <path d="M1 8L8 1h2" stroke="#c8cbd1" fill="none" />
                            </svg>
                            <div className="flex h-[8px] w-[60px] items-center justify-between rounded-tr-sm border-t border-r border-[#c8cbd1] bg-white pr-[2px] pl-[4px] font-bold whitespace-nowrap">
                                3D Curves - ...mid.ics
                                <Icon name="close" className="size-[4px]" />
                            </div>
                        </div>
                        <Icon name="down" className="mb-[2px] size-[4px]" />
                    </div>
                    <div className="flex min-h-0 flex-1">
                        <ScenePanel />
                        <Viewport />
                        <PropertiesPanel />
                    </div>
                </div>
                <div className="w-[9px] shrink-0 bg-[#dddfe5] pt-px pl-px">
                    <button className="flex flex-col items-center gap-px border border-[#e2cd7c] bg-[#f5e28a] py-px text-[#8a7c48]">
                        <Icon name="page" className="size-[5px]" />
                        <span className="[writing-mode:vertical-rl]">Shapes</span>
                    </button>
                </div>
            </div>
            <StatusBar />
        </div>
    );
}
